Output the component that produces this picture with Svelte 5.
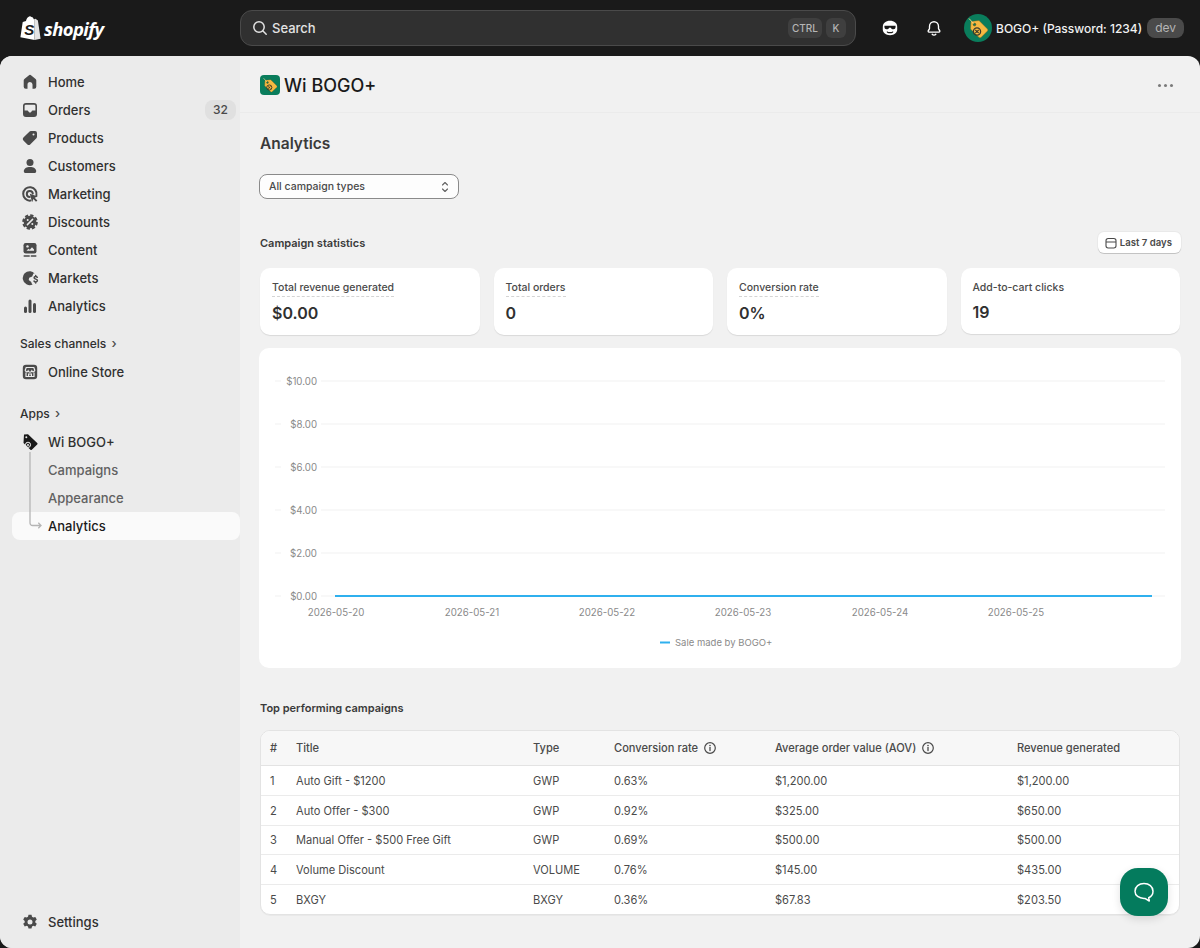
<script>
  const mainNav = [
    { label: 'Home', icon: 'home' },
    { label: 'Orders', icon: 'orders', badge: 32 },
    { label: 'Products', icon: 'products' },
    { label: 'Customers', icon: 'customers' },
    { label: 'Marketing', icon: 'marketing' },
    { label: 'Discounts', icon: 'discounts' },
    { label: 'Content', icon: 'content' },
    { label: 'Markets', icon: 'markets' },
    { label: 'Analytics', icon: 'analytics' },
  ];

  // Polaris-like glyphs, all drawn on a 20x20 box
  const icons = {
    home: '<path fill="#4a4a4a" d="M8.7 3.4a2 2 0 0 1 2.6 0l4.3 3.7a2 2 0 0 1 .7 1.5v6.2a2 2 0 0 1-2 2h-1.8v-4.3a2.5 2.5 0 0 0-5 0v4.3H5.7a2 2 0 0 1-2-2V8.6a2 2 0 0 1 .7-1.5z"/>',
    orders: '<path fill="#4a4a4a" fill-rule="evenodd" d="M6 3h8a3 3 0 0 1 3 3v8a3 3 0 0 1-3 3H6a3 3 0 0 1-3-3V6a3 3 0 0 1 3-3zm-.2 1.7A1.3 1.3 0 0 0 4.6 6v4.6h2.7c.6 0 1 .3 1.2.8.2.6.8 1 1.5 1s1.300-.4 1.500-1c.2-.5.6-.8 1.200-.8h2.700V6a1.300 1.300 0 0 0-1.300-1.300z"/>',
    products: '<path fill="#4a4a4a" fill-rule="evenodd" d="M11.200 3H15a2 2 0 0 1 2 2v3.800a2 2 0 0 1-.6 1.400l-6.200 6.200a2 2 0 0 1-2.800 0l-4-4a2 2 0 0 1 0-2.800l6.200-6.200A2 2 0 0 1 11.200 3zm2.300 2.500a1 1 0 1 0 0 2 1 1 0 0 0 0-2z"/>',
    customers: '<circle cx="10" cy="6.500" r="3.500" fill="#4a4a4a"/><path fill="#4a4a4a" d="M3.800 15.200c0-2.700 2.800-4.200 6.200-4.200s6.200 1.500 6.200 4.200c0 1.100-.8 1.800-1.800 1.800H5.600c-1 0-1.800-.7-1.800-1.800z"/>',
    marketing: '<path fill="none" stroke="#4a4a4a" stroke-width="2" stroke-linecap="round" d="M16.400 11.500A6.700 6.700 0 1 0 10.500 16.600"/><path fill="none" stroke="#4a4a4a" stroke-width="2" stroke-linecap="round" d="M12.800 9.600A3 3 0 1 0 9.700 12.900"/><path fill="#4a4a4a" d="M9.800 9.800l8 2.700-3.100 1.300 2.700 2.600-1.400 1.400-2.600-2.700-1.300 3.100z"/>',
    discounts: '<circle cx="10" cy="10" r="6.300" fill="#4a4a4a"/><circle cx="10" cy="10" r="6.800" fill="none" stroke="#4a4a4a" stroke-width="2" stroke-dasharray="3.300 2.040"/><path stroke="#ebebeb" stroke-width="1.500" stroke-linecap="round" d="M12.600 7.400l-5.200 5.200"/><circle cx="7.700" cy="7.900" r="1" fill="#ebebeb"/><circle cx="12.300" cy="12.100" r="1" fill="#ebebeb"/>',
    content: '<rect x="3.500" y="3" width="13" height="10.500" rx="2.200" fill="#4a4a4a"/><path fill="#ebebeb" d="M6.500 10.800l2-2 1.300 1 2.200-2.600 2 2.300v1.300z"/><circle cx="7.500" cy="6.400" r="1.200" fill="#ebebeb"/><path stroke="#4a4a4a" stroke-width="1.500" stroke-linecap="round" d="M4.200 16h5M11.300 16h4.500"/>',
    markets: '<path fill="#4a4a4a" d="M10.500 3.200a7 7 0 1 0 2.200 13.300c-1-.7-1.300-1.800-1.400-2.600l-2.600-1.800.5-2.400 3-1.200 1.200-2.900 1.200-.2a7 7 0 0 0-4.100-2.200z"/><path fill="none" stroke="#4a4a4a" stroke-width="1.500" stroke-linecap="round" d="M17.300 9.300c-.4-.6-1-.8-1.600-.8-.9 0-1.600.5-1.600 1.300 0 1.800 3.300.9 3.300 2.700 0 .8-.8 1.400-1.700 1.400-.7 0-1.300-.3-1.700-.9M15.700 7.400v1.100M15.700 13.900v1.200"/>',
    analytics: '<rect x="4" y="10.500" width="3" height="6.500" rx="1.500" fill="#4a4a4a"/><rect x="8.500" y="3.500" width="3" height="13.500" rx="1.500" fill="#4a4a4a"/><rect x="13" y="7" width="3" height="10" rx="1.500" fill="#4a4a4a"/>',
    store: '<rect x="2.800" y="2.800" width="14.400" height="14.400" rx="3.200" fill="#4a4a4a"/><path fill="none" stroke="#ebebeb" stroke-width="1.200" d="M6.200 5.500h7.600l1 2.800a1.600 1.600 0 0 1-3 .6 1.900 1.900 0 0 1-3.600 0 1.600 1.600 0 0 1-3-.6zM6 10.500v4h8v-4M8.600 14.500v-2.500h2.800v2.500"/>',
    settings: '<path fill="#4a4a4a" fill-rule="evenodd" d="M8.500 2.800h3l.5 2 1.300.7 2-.6 1.500 2.600-1.500 1.400v1.500l1.500 1.400-1.500 2.600-2-.6-1.300.8-.5 2h-3l-.5-2-1.300-.8-2 .6-1.500-2.600 1.500-1.400V8.900L3.200 7.500l1.500-2.600 2 .6 1.300-.7zM10 7.500a2.500 2.500 0 1 0 0 5 2.500 2.500 0 0 0 0-5z"/>',
  };

  const stats = [
    { label: 'Total revenue generated', value: '$0.00', dashed: true },
    { label: 'Total orders', value: '0', dashed: true },
    { label: 'Conversion rate', value: '0%', dashed: true },
    { label: 'Add-to-cart clicks', value: '19', dashed: false },
  ];

  const yTicks = [
    { label: '$10.00', y: 33 },
    { label: '$8.00', y: 76 },
    { label: '$6.00', y: 119 },
    { label: '$4.00', y: 162 },
    { label: '$2.00', y: 205 },
    { label: '$0.00', y: 248 },
  ];

  const xTicks = [
    { label: '2026-05-20', x: 77 },
    { label: '2026-05-21', x: 213 },
    { label: '2026-05-22', x: 348 },
    { label: '2026-05-23', x: 484 },
    { label: '2026-05-24', x: 621 },
    { label: '2026-05-25', x: 757 },
  ];

  const campaigns = [
    { title: 'Auto Gift - $1200', type: 'GWP', rate: '0.63%', aov: '$1,200.00', revenue: '$1,200.00' },
    { title: 'Auto Offer - $300', type: 'GWP', rate: '0.92%', aov: '$325.00', revenue: '$650.00' },
    { title: 'Manual Offer - $500 Free Gift', type: 'GWP', rate: '0.69%', aov: '$500.00', revenue: '$500.00' },
    { title: 'Volume Discount', type: 'VOLUME', rate: '0.76%', aov: '$145.00', revenue: '$435.00' },
    { title: 'BXGY', type: 'BXGY', rate: '0.36%', aov: '$67.83', revenue: '$203.50' },
  ];
</script>

{#snippet navIcon(name)}
  <svg class="nav-icon" viewBox="0 0 20 20" aria-hidden="true">{@html icons[name]}</svg>
{/snippet}

{#snippet appTag(size)}
  <svg width={size} height={size} viewBox="0 0 28 28" aria-hidden="true">
    <path fill="#f5b942" stroke="#7a5a17" stroke-width=".4" d="M7 7.500l8-1 8.500 8.500a1.500 1.500 0 0 1 0 2l-6.500 6.500a1.500 1.500 0 0 1-2 0L6.500 15z"/>
    <circle cx="10.500" cy="10.500" r="1.300" fill="#0a7d5c" stroke="#5b4a14" stroke-width=".6"/>
    <path stroke="#f5d98a" stroke-width=".9" d="M9.500 9.500L5 4.500"/>
    <circle cx="13" cy="17.500" r="3.600" fill="none" stroke="#3a3a2a" stroke-width="1.300"/>
    <path stroke="#3a3a2a" stroke-width="1.200" d="M11.300 15.800l3.400 3.400M14.700 15.800l-3.400 3.400"/>
  </svg>
{/snippet}

{#snippet infoIcon()}
  <svg class="info" viewBox="0 0 14 14" aria-hidden="true">
    <circle cx="7" cy="7" r="5.300" fill="none" stroke="#4a4a4a" stroke-width="1.200"/>
    <path stroke="#4a4a4a" stroke-width="1.300" stroke-linecap="round" d="M7 6.500v3"/>
    <circle cx="7" cy="4.500" r=".8" fill="#4a4a4a"/>
  </svg>
{/snippet}

<header class="topbar">
  <div class="brand">
    <svg class="bag" viewBox="0 0 21 24" aria-hidden="true">
      <path fill="#fff" d="M14.700 2.900l-1 .3C13.300 1.900 12.600 1 11.500 1 10.900.400 10.300.200 9.700.300 7.600.600 6.400 3.400 6 5l-2.500.8c-.7.200-.8.300-.9 1L.4 21.300 14.600 24z"/>
      <path fill="#e4e4e4" d="M15.500 2.800l-.8.100L14.600 24l6-1.300-2.700-18.200c0-.2-.2-.3-.4-.3z"/>
      <text x="4.300" y="19" class="bag-s">S</text>
    </svg>
    <span class="wordmark">shopify</span>
  </div>
  <div class="search">
    <svg class="search-icon" viewBox="0 0 16 16" aria-hidden="true">
      <circle cx="7" cy="7" r="5.200" fill="none" stroke="#e3e3e3" stroke-width="1.500"/>
      <path stroke="#e3e3e3" stroke-width="1.500" stroke-linecap="round" d="M11 11l3.200 3.200"/>
    </svg>
    <span class="search-text">Search</span>
    <span class="kbd">CTRL</span>
    <span class="kbd k">K</span>
  </div>
  <div class="top-actions">
    <svg class="top-icon" viewBox="0 0 20 20" aria-hidden="true">
      <path fill="#fff" d="M10 2c4.700 0 8 2.700 8 6.800v3c0 3.800-3.400 6.200-8 6.200s-8-2.400-8-6.200v-3C2 4.700 5.300 2 10 2z"/>
      <path fill="#1a1a1a" d="M3.800 7.500h12.400v1.700a2.300 2.300 0 0 1-2.300 2.200c-1.500 0-2.500-.6-2.900-1.700H9c-.4 1.100-1.400 1.700-2.900 1.700a2.300 2.300 0 0 1-2.300-2.200zM6.500 13.500c1.200.7 2.400 1 3.500 1s2.300-.3 3.500-1v1.400c-1.200.7-2.400 1-3.500 1s-2.300-.3-3.500-1z"/>
    </svg>
    <svg class="top-icon" viewBox="0 0 20 20" aria-hidden="true">
      <path fill="none" stroke="#fff" stroke-width="1.500" stroke-linejoin="round" d="M10 3a5 5 0 0 0-5 5v2.500c0 1-1.500 2-1.500 3.200 0 .5.300.8.800.8h11.400c.5 0 .8-.3.800-.8 0-1.200-1.500-2.200-1.500-3.200V8a5 5 0 0 0-5-5z"/>
      <path fill="none" stroke="#fff" stroke-width="1.500" stroke-linecap="round" d="M8 17c.5.600 1.200.9 2 .9s1.500-.3 2-.9"/>
    </svg>
  </div>
  <div class="account">
    <span class="avatar">{@render appTag(28)}</span>
    <span class="shop-name">BOGO+ (Password: 1234)</span>
    <span class="dev">dev</span>
  </div>
</header>

<div class="shell">
  <nav class="sidebar">
    {#each mainNav as item}
      <div class="nav-row">
        {@render navIcon(item.icon)}
        <span>{item.label}</span>
        {#if item.badge}<span class="badge">{item.badge}</span>{/if}
      </div>
    {/each}

    <div class="nav-section first">Sales channels <span class="chev">›</span></div>
    <div class="nav-row">
      {@render navIcon('store')}
      <span>Online Store</span>
    </div>

    <div class="nav-section second">Apps <span class="chev">›</span></div>
    <div class="app-group">
      <svg class="tree" viewBox="0 0 16 78" aria-hidden="true">
        <path fill="none" stroke="#b5b5b5" stroke-width="1.300" d="M1 0v71a2.500 2.500 0 0 0 2.500 2.500H12M9.300 70.800l2.700 2.700-2.700 2.700"/>
      </svg>
      <div class="nav-row">
        <svg class="nav-icon" viewBox="0 0 20 20" aria-hidden="true">
          <path fill="#1a1a1a" d="M4 2.500l4-.3 9.200 8.800a1 1 0 0 1 0 1.500l-5.400 5.200a1 1 0 0 1-1.400 0L3.500 11z"/>
          <circle cx="6.300" cy="5.200" r="1" fill="#ebebeb"/>
          <circle cx="8" cy="12.800" r="2.600" fill="none" stroke="#ebebeb" stroke-width="1"/>
          <path stroke="#ebebeb" stroke-width=".9" d="M6.800 11.600l2.400 2.400M9.200 11.600l-2.400 2.400"/>
        </svg>
        <span>Wi BOGO+</span>
      </div>
      <div class="nav-row sub"><span>Campaigns</span></div>
      <div class="nav-row sub"><span>Appearance</span></div>
      <div class="nav-row sub active"><span>Analytics</span></div>
    </div>

    <div class="nav-row settings">
      {@render navIcon('settings')}
      <span>Settings</span>
    </div>
  </nav>

  <main class="content">
    <div class="page-head">
      <span class="app-icon">{@render appTag(20)}</span>
      <span class="page-title">Wi BOGO+</span>
      <span class="more"><i></i><i></i><i></i></span>
    </div>

    <div class="page">
      <h1>Analytics</h1>

      <div class="select">
        <span>All campaign types</span>
        <svg viewBox="0 0 10 14" aria-hidden="true">
          <path fill="none" stroke="#616161" stroke-width="1.100" stroke-linecap="round" stroke-linejoin="round" d="M2.500 5L5 2.500 7.500 5M2.500 9L5 11.500 7.500 9"/>
        </svg>
      </div>

      <div class="stats-head">
        <h2>Campaign statistics</h2>
        <button class="range" type="button">
          <svg viewBox="0 0 14 14" aria-hidden="true">
            <rect x="2" y="2.500" width="10" height="9.500" rx="2.200" fill="none" stroke="#4a4a4a" stroke-width="1.100"/>
            <path stroke="#4a4a4a" stroke-width="1.100" d="M2 6h10"/>
          </svg>
          Last 7 days
        </button>
      </div>

      <div class="stat-grid">
        {#each stats as stat}
          <div class="stat">
            <div class="stat-label"><span class:dashed={stat.dashed}>{stat.label}</span></div>
            <div class="stat-value">{stat.value}</div>
          </div>
        {/each}
      </div>

      <div class="chart-card">
        <svg viewBox="0 0 922 320" width="922" height="320" aria-hidden="true">
          {#each yTicks as tick}
            <line x1="16" x2="906" y1={tick.y} y2={tick.y} stroke="#f1f1f1" stroke-width="1"/>
            <rect x="22" y={tick.y - 7} width="40" height="14" fill="#fff"/>
            <text class="axis" x="58" y={tick.y + 3.500} text-anchor="end">{tick.label}</text>
          {/each}
          {#each xTicks as tick}
            <text class="axis" x={tick.x} y="268" text-anchor="middle">{tick.label}</text>
          {/each}
          <line x1="76" x2="893" y1="248" y2="248" stroke="#2fb0ee" stroke-width="2"/>
          <line x1="401" x2="411" y1="294.500" y2="294.500" stroke="#2fb0ee" stroke-width="2"/>
          <text class="axis legend" x="416" y="298">Sale made by BOGO+</text>
        </svg>
      </div>

      <h2 class="top-title">Top performing campaigns</h2>

      <div class="table-wrap">
        <table>
          <colgroup>
            <col style="width: 26px" />
            <col style="width: 237px" />
            <col style="width: 81px" />
            <col style="width: 161px" />
            <col style="width: 242px" />
            <col />
          </colgroup>
          <thead>
            <tr>
              <th>#</th>
              <th>Title</th>
              <th>Type</th>
              <th><span class="th-info">Conversion rate {@render infoIcon()}</span></th>
              <th><span class="th-info">Average order value (AOV) {@render infoIcon()}</span></th>
              <th>Revenue generated</th>
            </tr>
          </thead>
          <tbody>
            {#each campaigns as row, i}
              <tr>
                <td>{i + 1}</td>
                <td>{row.title}</td>
                <td>{row.type}</td>
                <td>{row.rate}</td>
                <td>{row.aov}</td>
                <td>{row.revenue}</td>
              </tr>
            {/each}
          </tbody>
        </table>
      </div>
    </div>
  </main>
</div>

<button class="chat" type="button" aria-label="Chat">
  <svg viewBox="0 0 24 24" aria-hidden="true">
    <path fill="none" stroke="#fff" stroke-width="1.500" stroke-linejoin="round" d="M12 3.500c5 0 9 2.900 9 7.700 0 3.200-1.900 5.400-4.300 6.500l.6 3.300-4.400-2.600H12c-5 0-9-2.800-9-7.200 0-4.800 4-7.700 9-7.700z"/>
  </svg>
</button>

<style>
  :global(body) {
    margin: 0;
    background: #1a1a1a;
    font-family: Inter, "Liberation Sans", sans-serif;
    color: #303030;
  }

  .topbar {
    height: 56px;
    display: flex;
    align-items: center;
    background: #1a1a1a;
  }
  .brand {
    width: 240px;
    flex: none;
    display: flex;
    align-items: center;
    padding-left: 20px;
    box-sizing: border-box;
  }
  .bag {
    width: 21px;
    height: 24px;
  }
  .bag-s {
    font-family: "Liberation Sans", sans-serif;
    font-size: 15px;
    font-weight: 700;
    font-style: italic;
    fill: #1a1a1a;
  }
  .wordmark {
    margin-left: 3px;
    font-family: "Open Sans", sans-serif;
    font-size: 18.500px;
    font-weight: 700;
    font-style: italic;
    letter-spacing: -0.6px;
    color: #fff;
  }
  .search {
    width: 616px;
    height: 36px;
    box-sizing: border-box;
    display: flex;
    align-items: center;
    gap: 4px;
    padding: 0 9px 0 11px;
    background: #303030;
    border: 1px solid #4a4a4a;
    border-radius: 12px;
  }
  .search-icon {
    width: 16px;
    height: 16px;
  }
  .search-text {
    flex: 1;
    font-size: 13px;
    font-weight: 450;
    color: #e3e3e3;
  }
  .kbd {
    width: 34px;
    height: 20px;
    line-height: 20px;
    text-align: center;
    font-size: 10px;
    font-weight: 500;
    color: #b5b5b5;
    background: #3f3f3f;
    border-radius: 6px;
  }
  .kbd.k {
    width: 20px;
  }
  .top-actions {
    display: flex;
    gap: 26px;
    margin-left: 25px;
  }
  .top-icon {
    width: 18px;
    height: 18px;
    display: block;
  }
  .account {
    margin-left: 21px;
    display: flex;
    align-items: center;
  }
  .avatar {
    width: 28px;
    height: 28px;
    border-radius: 50%;
    background: #0a7d5c;
    overflow: hidden;
    display: block;
  }
  .shop-name {
    margin-left: 4px;
    font-size: 12px;
    font-weight: 500;
    color: #f1f1f1;
    white-space: nowrap;
  }
  .dev {
    margin-left: 5px;
    width: 37px;
    height: 20px;
    line-height: 20px;
    text-align: center;
    font-size: 12px;
    color: #b5b5b5;
    background: #4a4a4a;
    border-radius: 8px;
  }

  .shell {
    height: 892px;
    display: flex;
    border-radius: 12px;
    overflow: hidden;
    background: #f1f1f1;
  }

  .sidebar {
    width: 240px;
    flex: none;
    box-sizing: border-box;
    display: flex;
    flex-direction: column;
    padding: 12px 0 12px 12px;
    background: #ebebeb;
  }
  .nav-row {
    height: 28px;
    display: flex;
    align-items: center;
    gap: 8px;
    padding-left: 8px;
    font-size: 13px;
    font-weight: 450;
    color: #303030;
    border-radius: 8px;
  }
  .nav-icon {
    width: 20px;
    height: 20px;
    flex: none;
  }
  .badge {
    margin-left: auto;
    margin-right: 4px;
    width: 31px;
    height: 20px;
    line-height: 20px;
    text-align: center;
    font-size: 12px;
    color: #4a4a4a;
    background: #e0e0e0;
    border-radius: 8px;
  }
  .nav-section {
    font-size: 12px;
    font-weight: 450;
    color: #303030;
    padding-left: 8px;
    line-height: 16px;
  }
  .nav-section.first {
    margin-top: 15px;
    margin-bottom: 6px;
  }
  .nav-section.second {
    margin-top: 19px;
    margin-bottom: 6px;
  }
  .chev {
    display: inline-block;
    margin-left: 2px;
    font-size: 13px;
    color: #4a4a4a;
  }
  .app-group {
    position: relative;
  }
  .tree {
    position: absolute;
    left: 17px;
    top: 24px;
    width: 16px;
    height: 78px;
  }
  .sub {
    padding-left: 36px;
    color: #616161;
  }
  .sub.active {
    color: #1a1a1a;
    font-weight: 500;
    background: #fafafa;
  }
  .settings {
    margin-top: auto;
  }

  .content {
    flex: 1;
    min-width: 0;
  }
  .page-head {
    height: 57px;
    box-sizing: border-box;
    display: flex;
    align-items: center;
    padding: 2px 20px 0;
    border-bottom: 1px solid #ebebeb;
  }
  .app-icon {
    width: 20px;
    height: 20px;
    border-radius: 4px;
    background: #0a7d5c;
    overflow: hidden;
    display: block;
  }
  .page-title {
    margin-left: 4px;
    font-size: 18px;
    font-weight: 500;
    color: #1a1a1a;
  }
  .more {
    margin-left: auto;
    margin-right: 7px;
    display: flex;
    gap: 3px;
  }
  .more i {
    width: 3px;
    height: 3px;
    border-radius: 50%;
    background: #7a7a7a;
  }
  .page {
    padding: 0 20px;
  }
  h1 {
    margin: 20px 0 0;
    font-size: 15.500px;
    line-height: 22px;
    font-weight: 600;
    color: #3a3a3a;
  }
  .select {
    margin: 19px 0 0 -1px;
    width: 200px;
    height: 25px;
    box-sizing: border-box;
    display: flex;
    align-items: center;
    justify-content: space-between;
    padding: 0 8px 0 9px;
    background: #fdfdfd;
    border: 1px solid #8a8a8a;
    border-radius: 8px;
    font-size: 10.500px;
    font-weight: 450;
    color: #4a4a4a;
  }
  .select svg {
    width: 10px;
    height: 14px;
  }
  .stats-head {
    margin-top: 33px;
    display: flex;
    align-items: center;
    justify-content: space-between;
  }
  h2 {
    margin: 0;
    font-size: 11px;
    line-height: 16px;
    font-weight: 600;
    color: #3a3a3a;
  }
  .range {
    margin-right: -1px;
    height: 21px;
    padding: 0 9px 0 6px;
    display: flex;
    align-items: center;
    gap: 2px;
    border: 0;
    border-radius: 6px;
    background: #fff;
    box-shadow: 0 1px 0 rgba(0, 0, 0, 0.16), 0 0 0 1px rgba(0, 0, 0, 0.03);
    font-family: inherit;
    font-size: 9.600px;
    font-weight: 600;
    color: #4a4a4a;
  }
  .range svg {
    width: 14px;
    height: 14px;
  }
  .stat-grid {
    margin-top: 15px;
    display: grid;
    grid-template-columns: repeat(4, 1fr);
    gap: 14px;
    align-items: start;
  }
  .stat {
    padding: 12px 12px 10px;
    background: #fff;
    border-radius: 10px;
    box-shadow: 0 1px 1px rgba(0, 0, 0, 0.1);
  }
  .stat-label {
    font-size: 10.500px;
    line-height: 16px;
    font-weight: 450;
    color: #4a4a4a;
  }
  .stat-label span {
    display: inline-block;
  }
  .dashed {
    border-bottom: 1px dashed #d4d4d4;
  }
  .stat-value {
    margin-top: 4px;
    font-size: 16px;
    line-height: 24px;
    font-weight: 600;
    color: #303030;
  }
  .chart-card {
    margin: 13px -1px 0;
    height: 320px;
    background: #fff;
    border-radius: 10px;
  }
  .chart-card svg {
    display: block;
  }
  .axis {
    font-family: Inter, "Liberation Sans", sans-serif;
    font-size: 9.700px;
    fill: #8a8a8a;
  }
  .legend {
    font-size: 9.500px;
  }
  .top-title {
    margin-top: 32px;
  }
  .table-wrap {
    margin-top: 14px;
    background: #fff;
    border: 1px solid #e3e3e3;
    border-radius: 10px;
    overflow: hidden;
    box-shadow: 0 1px 0 rgba(0, 0, 0, 0.03);
  }
  table {
    width: 100%;
    table-layout: fixed;
    border-collapse: collapse;
    font-size: 11.100px;
    color: #4a4a4a;
  }
  th {
    height: 34px;
    padding: 0 0 0 9px;
    text-align: left;
    font-weight: 450;
    background: #f7f7f7;
    border-bottom: 1px solid #e3e3e3;
  }
  .th-info {
    display: inline-flex;
    align-items: center;
    gap: 5px;
  }
  .info {
    width: 14px;
    height: 14px;
  }
  td {
    height: 27.800px;
    padding: 1px 0 0 9px;
    border-bottom: 1px solid #ebebeb;
  }
  tbody tr:last-child td {
    border-bottom: 0;
  }
  .chat {
    position: fixed;
    left: 1120px;
    top: 868px;
    width: 48px;
    height: 48px;
    padding: 12px;
    border: 0;
    border-radius: 18px;
    background: #047b5d;
    box-shadow: 0 3px 8px rgba(0, 0, 0, 0.12);
  }
  .chat svg {
    display: block;
    width: 24px;
    height: 24px;
  }
</style>
